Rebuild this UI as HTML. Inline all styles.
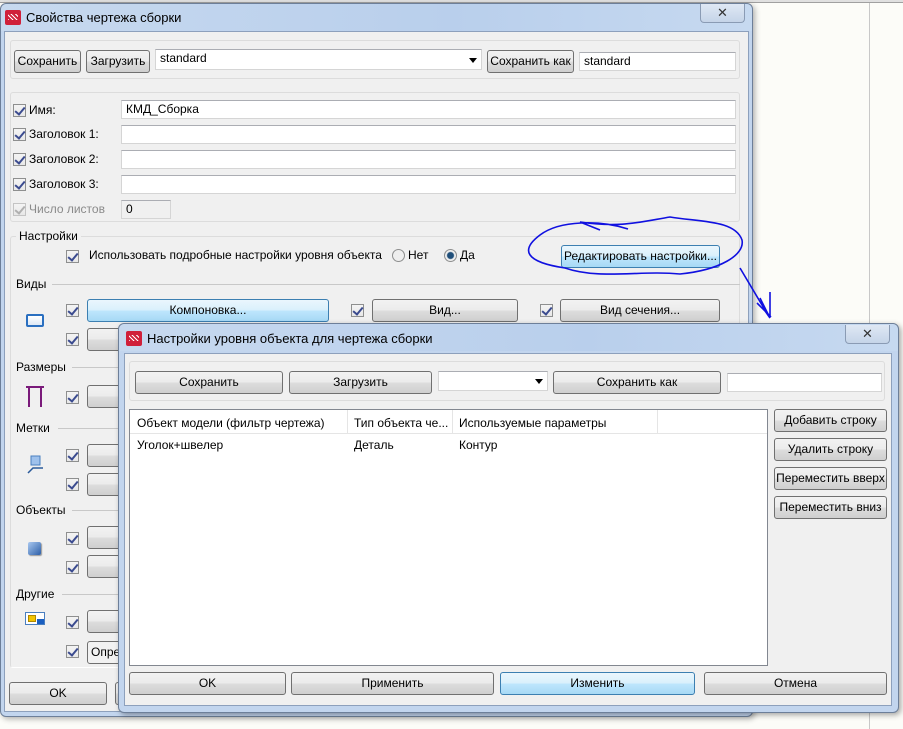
<!DOCTYPE html>
<html><head><meta charset="utf-8"><style>
*{box-sizing:border-box;margin:0;padding:0}
body{width:903px;height:729px;position:relative;overflow:hidden;background:#fcfcf8;font:12px "Liberation Sans","DejaVu Sans",sans-serif;color:#000}
.a{position:absolute}
.btn{position:absolute;border:1px solid #707070;border-radius:3px;background:linear-gradient(#f2f2f2 0,#ebebeb 50%,#dddddd 51%,#cfcfcf 100%);text-align:center;line-height:20px;white-space:nowrap;overflow:hidden}
.btn.blue{border-color:#3c7fb1;background:linear-gradient(#eaf6fd 0,#d9f0fc 50%,#bee6fd 51%,#a7d9f5 100%)}
.inp{position:absolute;background:#fff;border:1px solid #d5d5d5;border-top-color:#abadb3;padding-left:4px;line-height:17px}
.cb{position:absolute;width:13px;height:13px;border:1px solid #8e8f8f;background:linear-gradient(#f4f4f4,#e8e8e8)}
.cb:after{content:"";position:absolute;left:3px;top:0px;width:4px;height:8px;border:solid #3b4b8f;border-width:0 2px 2px 0;transform:rotate(40deg)}
.cb.dis{border-color:#c4c4c4}.cb.dis:after{border-color:#b0b0b0}
.grp{position:absolute;border:1px solid #dcdcdc;border-radius:3px}
.hl{position:absolute;height:1px;background:#c8c8c8}
.title{position:absolute;background:linear-gradient(90deg,#c7d9ef,#b9cfec 60%,#c6d9f0);}
.x{position:absolute;width:45px;height:19px;border:1px solid #8a9bb4;border-top:none;border-radius:0 0 4px 4px;background:linear-gradient(#dfe8f4,#c5d4e8);text-align:center;font-weight:bold;color:#333;font-size:13px;line-height:17px}
.logo{position:absolute;width:16px;height:15px;background:#d0203a;border-radius:2px}
.logo:after{content:"";position:absolute;left:3px;top:4px;width:10px;height:6px;background:repeating-linear-gradient(45deg,#fff 0 1px,transparent 1px 3px)}
</style></head><body>
<div class="a" style="left:0;top:0;width:903px;height:3px;background:#e0e0e0;border-bottom:1px solid #a0a0a0"></div>
<div class="a" style="left:869px;top:3px;width:1px;height:726px;background:#c8c8c8"></div>

<!-- main dialog -->
<div class="a" style="left:0;top:3px;width:753px;height:714px;border:1px solid #6d7f99;border-radius:6px;background:#c2d5ee;box-shadow:2px 2px 6px rgba(0,0,0,.3)"></div>
<div class="title" style="left:1px;top:4px;width:751px;height:27px;border-radius:6px 6px 0 0"></div>
<div class="logo" style="left:5px;top:10px"></div>
<div class="a" style="left:26px;top:10px;font-size:13px">Свойства чертежа сборки</div>
<div class="x" style="left:700px;top:4px">✕</div>
<div class="a" style="left:4px;top:31px;width:745px;height:681px;background:#f0f0f0;border:1px solid #8da0bc"></div>

<div class="grp" style="left:10px;top:40px;width:730px;height:39px"></div>
<div class="btn" style="left:14px;top:50px;width:67px;height:23px;line-height:21px">Сохранить</div>
<div class="btn" style="left:86px;top:50px;width:64px;height:23px;line-height:21px">Загрузить</div>
<div class="inp" style="left:155px;top:49px;width:327px;height:21px">standard</div>
<div class="a" style="left:469px;top:58px;border:4px solid transparent;border-top:5px solid #000"></div>
<div class="btn" style="left:487px;top:50px;width:87px;height:23px;line-height:21px">Сохранить как</div>
<div class="inp" style="left:579px;top:52px;width:157px;height:19px">standard</div>

<div class="grp" style="left:10px;top:92px;width:730px;height:130px"></div>
<div class="cb" style="left:13px;top:104px"></div><div class="a" style="left:29px;top:103px">Имя:</div>
<div class="inp" style="left:121px;top:100px;width:615px;height:19px">КМД_Сборка</div>
<div class="cb" style="left:13px;top:128px"></div><div class="a" style="left:29px;top:127px">Заголовок 1:</div>
<div class="inp" style="left:121px;top:125px;width:615px;height:19px"></div>
<div class="cb" style="left:13px;top:153px"></div><div class="a" style="left:29px;top:152px">Заголовок 2:</div>
<div class="inp" style="left:121px;top:150px;width:615px;height:19px"></div>
<div class="cb" style="left:13px;top:178px"></div><div class="a" style="left:29px;top:177px">Заголовок 3:</div>
<div class="inp" style="left:121px;top:175px;width:615px;height:19px"></div>
<div class="cb dis" style="left:13px;top:203px"></div><div class="a" style="left:29px;top:202px;color:#8a8a8a">Число листов</div>
<div class="inp" style="left:121px;top:200px;width:50px;height:19px;background:#f0f0f0">0</div>

<div class="grp" style="left:10px;top:236px;width:730px;height:432px;border-bottom-color:#fff"></div>
<div class="a" style="left:16px;top:229px;background:#f0f0f0;padding:0 3px">Настройки</div>
<div class="cb" style="left:66px;top:250px"></div>
<div class="a" style="left:89px;top:248px">Использовать подробные настройки уровня объекта</div>
<div class="a" style="left:392px;top:249px;width:13px;height:13px;border-radius:50%;border:1px solid #8e8f8f;background:#eee"></div>
<div class="a" style="left:408px;top:248px">Нет</div>
<div class="a" style="left:444px;top:249px;width:13px;height:13px;border-radius:50%;border:1px solid #8e8f8f;background:radial-gradient(#1f4e79 0 3px,#eee 4px)"></div>
<div class="a" style="left:460px;top:248px">Да</div>
<div class="btn blue" style="left:561px;top:245px;width:159px;height:23px;line-height:21px">Редактировать настройки...</div>

<div class="a" style="left:16px;top:277px">Виды</div><div class="hl" style="left:52px;top:284px;width:688px"></div>
<div class="a" style="left:26px;top:314px;width:18px;height:13px;border:2px solid #2a6fc0;border-radius:2px;background:linear-gradient(#fff,#dde8f5)"></div>
<div class="cb" style="left:66px;top:304px"></div>
<div class="btn blue" style="left:87px;top:299px;width:242px;height:23px">Компоновка...</div>
<div class="cb" style="left:351px;top:304px"></div>
<div class="btn" style="left:372px;top:299px;width:146px;height:23px">Вид...</div>
<div class="cb" style="left:540px;top:304px"></div>
<div class="btn" style="left:560px;top:299px;width:160px;height:23px">Вид сечения...</div>
<div class="cb" style="left:66px;top:333px"></div>
<div class="btn" style="left:87px;top:328px;width:60px;height:23px"></div>

<div class="a" style="left:16px;top:360px">Размеры</div><div class="hl" style="left:72px;top:367px;width:668px"></div>
<svg class="a" style="left:24px;top:385px" width="22" height="22"><path d="M2 2H20M5 2V22M17 2V22" stroke="#7a1a7a" stroke-width="2" fill="none"/></svg>
<div class="cb" style="left:66px;top:391px"></div><div class="btn" style="left:87px;top:385px;width:60px;height:23px"></div>

<div class="a" style="left:16px;top:421px">Метки</div><div class="hl" style="left:58px;top:428px;width:682px"></div>
<svg class="a" style="left:27px;top:455px" width="20" height="20"><rect x="4" y="1" width="9" height="9" fill="#9ec1ec" stroke="#4a7fc0"/><path d="M1 18L6 13H16" stroke="#2a5a9a" stroke-width="1.5" fill="none"/></svg>
<div class="cb" style="left:66px;top:449px"></div><div class="btn" style="left:87px;top:444px;width:60px;height:23px"></div>
<div class="cb" style="left:66px;top:478px"></div><div class="btn" style="left:87px;top:473px;width:60px;height:23px"></div>

<div class="a" style="left:16px;top:503px">Объекты</div><div class="hl" style="left:72px;top:510px;width:668px"></div>
<div class="a" style="left:28px;top:542px;width:13px;height:13px;border-radius:2px;background:linear-gradient(135deg,#a9c8f0,#2d5fa8);box-shadow:1px 1px 1px #999"></div>
<div class="cb" style="left:66px;top:532px"></div><div class="btn" style="left:87px;top:526px;width:60px;height:23px"></div>
<div class="cb" style="left:66px;top:561px"></div><div class="btn" style="left:87px;top:555px;width:60px;height:23px"></div>

<div class="a" style="left:16px;top:587px">Другие</div><div class="hl" style="left:62px;top:594px;width:678px"></div>
<div class="a" style="left:25px;top:612px;width:20px;height:13px;border:1px solid #4a7fc0;background:#fff"><div class="a" style="left:2px;top:2px;width:8px;height:7px;background:#f2c400;border:1px solid #b08800"></div><div class="a" style="right:0;bottom:0;width:7px;height:5px;background:#1a5ec0"></div></div>
<div class="cb" style="left:66px;top:616px"></div><div class="btn" style="left:87px;top:610px;width:60px;height:23px"></div>
<div class="cb" style="left:66px;top:645px"></div><div class="btn" style="left:87px;top:641px;width:60px;height:23px;text-align:left;padding-left:3px;background:#f2f2f2">Опре</div>

<div class="btn" style="left:9px;top:682px;width:98px;height:23px">OK</div>
<div class="btn" style="left:115px;top:682px;width:30px;height:23px"></div>

<!-- hand drawn annotation -->
<svg class="a" style="left:520px;top:210px" width="260" height="120">
<path d="M108 19 C80 10 40 10 20 25 C0 40 5 52 45 58 C80 70 120 60 160 64 C200 60 225 45 222 30 C215 10 180 12 150 7 C120 12 100 18 60 12 L80 20 M220 58 L245 100 M240 88 L250 108 L243 98 M237 93 L251 107 M250 82 L250 107" stroke="#1010e0" stroke-width="1.6" fill="none"/>
</svg>

<!-- second dialog -->
<div class="a" style="left:118px;top:323px;width:781px;height:390px;border:1px solid #6d7f99;border-radius:6px;background:#c2d5ee;box-shadow:2px 2px 6px rgba(0,0,0,.35)"></div>
<div class="title" style="left:119px;top:324px;width:779px;height:27px;border-radius:6px 6px 0 0"></div>
<div class="logo" style="left:126px;top:331px"></div>
<div class="a" style="left:147px;top:331px;font-size:13px">Настройки уровня объекта для чертежа сборки</div>
<div class="x" style="left:845px;top:325px">✕</div>
<div class="a" style="left:124px;top:353px;width:768px;height:353px;background:#f0f0f0;border:1px solid #8da0bc"></div>

<div class="grp" style="left:129px;top:361px;width:756px;height:40px"></div>
<div class="btn" style="left:135px;top:371px;width:148px;height:23px">Сохранить</div>
<div class="btn" style="left:289px;top:371px;width:143px;height:23px">Загрузить</div>
<div class="inp" style="left:438px;top:371px;width:110px;height:20px"></div>
<div class="a" style="left:535px;top:379px;border:4px solid transparent;border-top:5px solid #000"></div>
<div class="btn" style="left:553px;top:371px;width:168px;height:23px">Сохранить как</div>
<div class="inp" style="left:727px;top:373px;width:155px;height:19px"></div>

<div class="a" style="left:129px;top:409px;width:639px;height:257px;background:#fff;border:1px solid #828790"></div>
<div class="a" style="left:130px;top:410px;width:637px;height:24px;border-bottom:1px solid #e5e5e5"></div>
<div class="a" style="left:347px;top:410px;width:1px;height:24px;background:#e5e5e5"></div>
<div class="a" style="left:452px;top:410px;width:1px;height:24px;background:#e5e5e5"></div>
<div class="a" style="left:657px;top:410px;width:1px;height:24px;background:#e5e5e5"></div>
<div class="a" style="left:137px;top:416px">Объект модели (фильтр чертежа)</div>
<div class="a" style="left:354px;top:416px">Тип объекта че...</div>
<div class="a" style="left:459px;top:416px">Используемые параметры</div>
<div class="a" style="left:137px;top:438px">Уголок+швелер</div>
<div class="a" style="left:354px;top:438px">Деталь</div>
<div class="a" style="left:459px;top:438px">Контур</div>

<div class="btn" style="left:774px;top:409px;width:113px;height:23px">Добавить строку</div>
<div class="btn" style="left:774px;top:438px;width:113px;height:23px">Удалить строку</div>
<div class="btn" style="left:774px;top:467px;width:113px;height:23px">Переместить вверх</div>
<div class="btn" style="left:774px;top:496px;width:113px;height:23px">Переместить вниз</div>

<div class="btn" style="left:129px;top:672px;width:157px;height:23px">OK</div>
<div class="btn" style="left:291px;top:672px;width:203px;height:23px">Применить</div>
<div class="btn blue" style="left:500px;top:672px;width:195px;height:23px">Изменить</div>
<div class="btn" style="left:704px;top:672px;width:183px;height:23px">Отмена</div>
</body></html>
